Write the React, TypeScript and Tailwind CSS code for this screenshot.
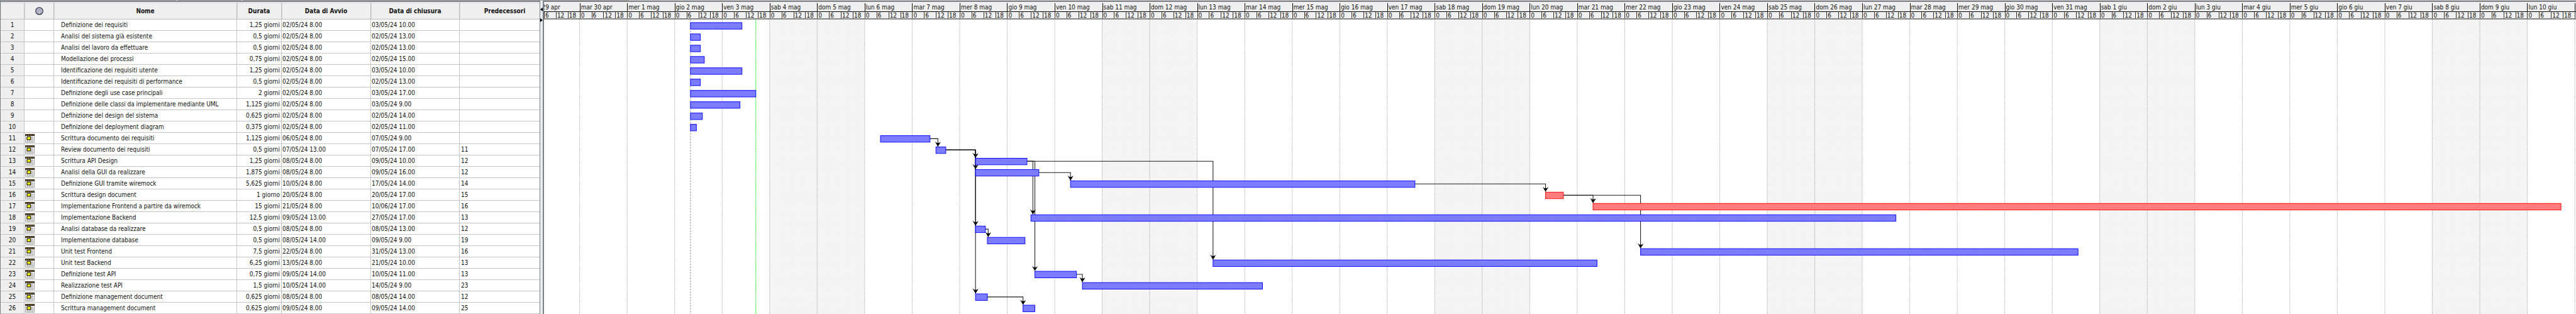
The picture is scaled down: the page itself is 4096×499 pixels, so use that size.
type Task = {
  id: number;
  name: string;
  duration: string;
  start: string;
  end: string;
  pred?: number;
  from: number;
  to: number;
  critical?: boolean;
};

const DAY = 120;
const HOUR = 5;
const FIRST_DAY = 90;

/** Horizontal chart position of a moment; day 0 is 30 April. */
const at = (day: number, hour: number) => FIRST_DAY + day * DAY + hour * HOUR;

const tasks: Task[] = [
  { id: 1, name: "Definizione dei requisiti", duration: "1,25 giorni", start: "02/05/24 8.00", end: "03/05/24 10.00", from: at(2, 8), to: at(3, 10) },
  { id: 2, name: "Analisi del sistema già esistente", duration: "0,5 giorni", start: "02/05/24 8.00", end: "02/05/24 13.00", from: at(2, 8), to: at(2, 13) },
  { id: 3, name: "Analisi del lavoro da effettuare", duration: "0,5 giorni", start: "02/05/24 8.00", end: "02/05/24 13.00", from: at(2, 8), to: at(2, 13) },
  { id: 4, name: "Modellazione dei processi", duration: "0,75 giorni", start: "02/05/24 8.00", end: "02/05/24 15.00", from: at(2, 8), to: at(2, 15) },
  { id: 5, name: "Identificazione dei requisiti utente", duration: "1,25 giorni", start: "02/05/24 8.00", end: "03/05/24 10.00", from: at(2, 8), to: at(3, 10) },
  { id: 6, name: "Identificazione dei requisiti di performance", duration: "0,5 giorni", start: "02/05/24 8.00", end: "02/05/24 13.00", from: at(2, 8), to: at(2, 13) },
  { id: 7, name: "Definizione degli use case principali", duration: "2 giorni", start: "02/05/24 8.00", end: "03/05/24 17.00", from: at(2, 8), to: at(3, 17) },
  { id: 8, name: "Definizione delle classi da implementare mediante UML", duration: "1,125 giorni", start: "02/05/24 8.00", end: "03/05/24 9.00", from: at(2, 8), to: at(3, 9) },
  { id: 9, name: "Definizione del design del sistema", duration: "0,625 giorni", start: "02/05/24 8.00", end: "02/05/24 14.00", from: at(2, 8), to: at(2, 14) },
  { id: 10, name: "Definizione del deployment diagram", duration: "0,375 giorni", start: "02/05/24 8.00", end: "02/05/24 11.00", from: at(2, 8), to: at(2, 11) },
  { id: 11, name: "Scrittura documento dei requisiti", duration: "1,125 giorni", start: "06/05/24 8.00", end: "07/05/24 9.00", from: at(6, 8), to: at(7, 9) },
  { id: 12, name: "Review documento dei requisiti", duration: "0,5 giorni", start: "07/05/24 13.00", end: "07/05/24 17.00", pred: 11, from: at(7, 12), to: at(7, 17) },
  { id: 13, name: "Scrittura API Design", duration: "1,25 giorni", start: "08/05/24 8.00", end: "09/05/24 10.00", pred: 12, from: at(8, 8), to: at(9, 10) },
  { id: 14, name: "Analisi della GUI da realizzare", duration: "1,875 giorni", start: "08/05/24 8.00", end: "09/05/24 16.00", pred: 12, from: at(8, 8), to: at(9, 16) },
  { id: 15, name: "Definizione GUI tramite wiremock", duration: "5,625 giorni", start: "10/05/24 8.00", end: "17/05/24 14.00", pred: 14, from: at(10, 8), to: at(17, 14) },
  { id: 16, name: "Scrittura design document", duration: "1 giorno", start: "20/05/24 8.00", end: "20/05/24 17.00", pred: 15, from: at(20, 8), to: at(20, 17), critical: true },
  { id: 17, name: "Implementazione Frontend a partire da wiremock", duration: "15 giorni", start: "21/05/24 8.00", end: "10/06/24 17.00", pred: 16, from: at(21, 8), to: at(41, 17), critical: true },
  { id: 18, name: "Implementazione Backend", duration: "12,5 giorni", start: "09/05/24 13.00", end: "27/05/24 17.00", pred: 13, from: at(9, 12), to: at(27, 17) },
  { id: 19, name: "Analisi database da realizzare", duration: "0,5 giorni", start: "08/05/24 8.00", end: "08/05/24 13.00", pred: 12, from: at(8, 8), to: at(8, 13) },
  { id: 20, name: "Implementazione database", duration: "0,5 giorni", start: "08/05/24 14.00", end: "09/05/24 9.00", pred: 19, from: at(8, 14), to: at(9, 9) },
  { id: 21, name: "Unit test Frontend", duration: "7,5 giorni", start: "22/05/24 8.00", end: "31/05/24 13.00", pred: 16, from: at(22, 8), to: at(31, 13) },
  { id: 22, name: "Unit test Backend", duration: "6,25 giorni", start: "13/05/24 8.00", end: "21/05/24 10.00", pred: 13, from: at(13, 8), to: at(21, 10) },
  { id: 23, name: "Definizione test API", duration: "0,75 giorni", start: "09/05/24 14.00", end: "10/05/24 11.00", pred: 13, from: at(9, 14), to: at(10, 11) },
  { id: 24, name: "Realizzazione test API", duration: "1,5 giorni", start: "10/05/24 14.00", end: "14/05/24 9.00", pred: 23, from: at(10, 14), to: at(14, 9) },
  { id: 25, name: "Definizione management document", duration: "0,625 giorni", start: "08/05/24 8.00", end: "08/05/24 14.00", pred: 12, from: at(8, 8), to: at(8, 14) },
  { id: 26, name: "Scrittura management document", duration: "0,625 giorni", start: "09/05/24 8.00", end: "09/05/24 14.00", pred: 25, from: at(9, 8), to: at(9, 14) },
];

const WEEKDAYS = ["mar", "mer", "gio", "ven", "sab", "dom", "lun"];

const days = Array.from({ length: 42 }, (_, i) => {
  const label = i === 0 ? "30 apr" : i <= 31 ? `${i} mag` : `${i - 31} giu`;
  return `${WEEKDAYS[i % 7]} ${label}`;
});

const CHART_W = 5133;
const CHART_H = 743;
const barTop = (id: number) => 7 + (id - 1) * 28.52;
const BAR_H = 18;

function InfoIcon() {
  return (
    <svg viewBox="0 0 20 20" className="mx-auto h-[13px] w-[13px]" aria-label="Indicatori">
      <circle cx="10" cy="10" r="8.8" fill="#b9b5d6" stroke="#3a3a44" strokeWidth="2" />
      <circle cx="10" cy="5.6" r="1.7" fill="#eeeef6" stroke="#6a6878" strokeWidth="0.8" />
      <path d="M7.5 8.5h4v5.5h1.5v2h-6v-2h1.7v-3.5h-1.2z" fill="#eeeef6" stroke="#6a6878" strokeWidth="0.8" />
    </svg>
  );
}

function CalendarIcon() {
  return (
    <svg viewBox="0 0 15 14" className="ml-px h-[14px] w-[15px]" aria-label="Vincolo di data">
      <rect width="15" height="14" fill="#fff" />
      <path d="M0.5 3v10.5h14V3M4 3v11M7.5 3v11M11 3v11M0 6.2h15M0 8.8h15M0 11.3h15" fill="none" stroke="#a3a3a3" strokeWidth="0.9" />
      <rect width="15" height="3" fill="#111" />
      <path d="M1 1.5h13" stroke="#d09a3a" strokeWidth="1.1" strokeDasharray="2.6 0.9" />
      <rect x="3.1" y="4.3" width="5.6" height="4.6" fill="#ffff00" stroke="#1a1a00" strokeWidth="1.1" />
    </svg>
  );
}

const th = "border-b border-r border-[#bdbdbd] bg-[#efefef] p-0 text-center font-bold shadow-[inset_1px_1px_0_#d6d6d6]";
const td = "overflow-hidden whitespace-nowrap border-b border-r border-[#c4c4c4] p-0";

function TaskTable() {
  return (
    <table className="w-[857px] shrink-0 table-fixed border-separate border-spacing-0 bg-white">
      <colgroup>
        <col className="w-[38px]" />
        <col className="w-[47px]" />
        <col className="w-[291px]" />
        <col className="w-[71px]" />
        <col className="w-[142px]" />
        <col className="w-[141px]" />
        <col className="w-[127px]" />
      </colgroup>
      <thead>
        <tr className="h-[27px]">
          <th className={th} aria-label="Numero" />
          <th className={th}><InfoIcon /></th>
          <th className={th}>Nome</th>
          <th className={th}>Durata</th>
          <th className={th}>Data di Avvio</th>
          <th className={th}>Data di chiusura</th>
          <th className="border-b border-[#bdbdbd] bg-[#efefef] p-0 pl-4 text-center font-bold shadow-[inset_1px_1px_0_#d6d6d6]">Predecessori</th>
        </tr>
      </thead>
      <tbody>
        {tasks.map((t) => (
          <tr key={t.id} className="h-[18px]">
            <td className="border-b border-r border-[#c4c4c4] bg-[#efefef] p-0 text-center">{t.id}</td>
            <td className={td}>{t.id > 10 && <CalendarIcon />}</td>
            <td className={`${td} pl-[11px]`}>{t.name}</td>
            <td className={`${td} pr-0.5 text-right`}>{t.duration}</td>
            <td className={`${td} pl-px`}>{t.start}</td>
            <td className={`${td} pl-px`}>{t.end}</td>
            <td className="border-b border-[#c4c4c4] p-0 pl-0.5">{t.pred}</td>
          </tr>
        ))}
      </tbody>
    </table>
  );
}

function Hours({ list }: { list: number[] }) {
  return (
    <div className="flex h-[12px] border-t border-black leading-[11px]">
      {list.map((h) => (
        <div key={h} className="w-0 grow border-l border-[#333] pl-px">{h}</div>
      ))}
    </div>
  );
}

function Timeline() {
  return (
    <div className="flex h-[27px] overflow-hidden whitespace-nowrap border-b-2 border-[#858585] bg-[#efefef] text-[#111]">
      <div className="w-0 overflow-hidden" style={{ flexGrow: FIRST_DAY }}>
        <div className="mt-px flex h-[13px] justify-end pr-[31px] leading-[14px]">lun 29 apr</div>
        <Hours list={[6, 12, 18]} />
      </div>
      {days.map((d) => (
        <div key={d} className="w-0" style={{ flexGrow: DAY }}>
          <div className="mt-px h-[13px] border-l border-black pl-px leading-[14px]">{d}</div>
          <Hours list={[0, 6, 12, 18]} />
        </div>
      ))}
      <div className="w-0 overflow-hidden" style={{ flexGrow: CHART_W - FIRST_DAY - DAY * 42 }}>
        <div className="mt-px h-[13px] border-l border-black pl-px leading-[14px]">mar 11 giu</div>
        <Hours list={[0]} />
      </div>
    </div>
  );
}

function Link({ task }: { task: Task }) {
  const source = tasks[task.pred! - 1];
  const shift = task.id === 12 || task.id === 18 ? HOUR : task.id === 20 ? 2 : 0;
  const x = task.from + shift;
  const y = barTop(task.id);
  return (
    <g>
      <path d={`M${source.to} ${barTop(source.id) + 8.5}H${x}V${y}`} fill="none" stroke="#1c1c1c" strokeWidth="1.7" />
      <path d={`M${x} ${y}l-7.5-13 4.5 3.5h6l4.5-2.5z`} fill="#000" />
    </g>
  );
}

function Chart() {
  return (
    <svg viewBox={`0 0 ${CHART_W} ${CHART_H}`} preserveAspectRatio="none" className="block h-[468px] w-full bg-white" role="img" aria-label="Diagramma di Gantt">
      <defs>
        <pattern id="weekend" width="6" height="4" patternUnits="userSpaceOnUse">
          <rect width="6" height="4" fill="#fbfbfb" />
          <path d="M0 1h3M3 3h3" stroke="#ededed" strokeWidth="2" />
        </pattern>
        <pattern id="normal" width="4" height="4" patternUnits="userSpaceOnUse">
          <rect width="4" height="4" fill="#8c8cff" />
          <path d="M0 1h2M2 3h2" stroke="#6c6cff" strokeWidth="2" />
        </pattern>
        <pattern id="critical" width="4" height="4" patternUnits="userSpaceOnUse">
          <rect width="4" height="4" fill="#ff8c8c" />
          <path d="M0 1h2M2 3h2" stroke="#ff6c6c" strokeWidth="2" />
        </pattern>
      </defs>
      {[4, 11, 18, 25, 32, 39].map((d) => (
        <rect key={d} x={at(d, 0)} width={DAY * 2} height={CHART_H} fill="url(#weekend)" />
      ))}
      {Array.from({ length: 43 }, (_, d) => (
        <path key={d} d={`M${at(d, 0)} 0V${CHART_H}`} stroke="#b8b8b8" strokeWidth="1.6" strokeDasharray="2 1" />
      ))}
      <path d={`M${at(2, 8)} 0V${CHART_H}`} stroke="#8a8a8a" strokeWidth="1.6" strokeDasharray="4 3" />
      <path d={`M${at(3, 17)} 0V${CHART_H}`} stroke="#30ee30" strokeWidth="1.6" strokeDasharray="3 1" />
      {tasks.filter((t) => t.pred).map((t) => <Link key={t.id} task={t} />)}
      {tasks.map((t) => (
        <rect
          key={t.id}
          x={t.from}
          y={barTop(t.id) + 0.8}
          width={t.to - t.from}
          height={BAR_H - 1.6}
          fill={t.critical ? "url(#critical)" : "url(#normal)"}
          stroke={t.critical ? "#ff1010" : "#1010ff"}
          strokeWidth="1.6"
        />
      ))}
    </svg>
  );
}

export default function App() {
  return (
    <main className="overflow-hidden bg-[#efefef] font-['DejaVu_Sans_Condensed','DejaVu_Sans',sans-serif] text-[10px] leading-[15px] text-[#111]">
      <div className="flex h-px bg-[#ababab]">
        <div className="w-[282px] border-r-2 border-[#e4e4e4]" />
        <div className="w-[104px] border-r-2 border-[#e4e4e4]" />
        <div className="w-[616px] border-r-2 border-[#e4e4e4]" />
        <div className="grow bg-[#d8d8d8]" />
      </div>
      <div className="flex">
        <section className="shrink-0 border-x border-t-2 border-[#7b7e84] pt-px">
          <TaskTable />
        </section>
        <div className="flex w-[4px] shrink-0 flex-col items-center gap-[11px] bg-[#ececf0] pt-[11px]">
          <svg viewBox="0 0 4 6" className="h-1.5 w-1"><path d="M4 0v6L0 3z" /></svg>
          <svg viewBox="0 0 4 6" className="h-1.5 w-1"><path d="M0 0v6l4-3z" /></svg>
        </div>
        <section className="min-w-0 grow border-l-2 border-t-2 border-[#7b7e84] pt-px">
          <Timeline />
          <Chart />
        </section>
      </div>
    </main>
  );
}
